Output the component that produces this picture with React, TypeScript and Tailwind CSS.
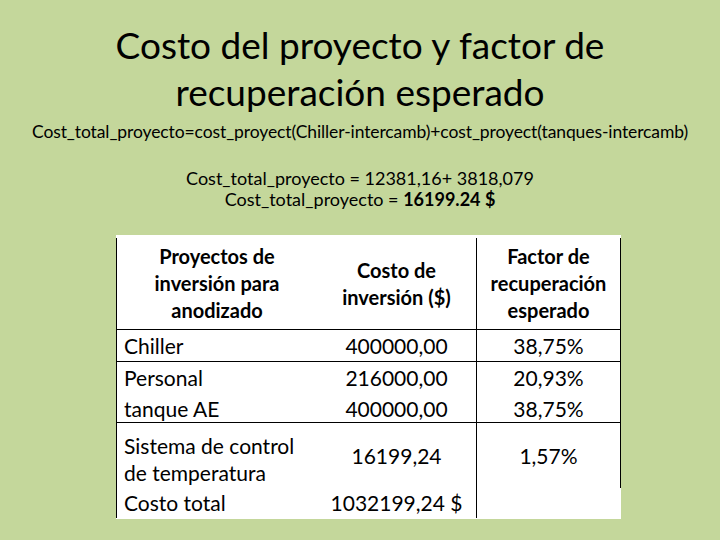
const rows = [
  { label: ["Chiller"], cost: "400000,00", factor: "38,75%" },
];

export default function App() {
  return (
    <div
      className="w-[720px] h-[540px] bg-[#c4d79b] text-black overflow-hidden"
      style={{ fontFamily: "Lato, 'Open Sans', sans-serif" }}
    >
      <h1 className="pt-[21px] text-center text-[37px] leading-[47px] font-normal">
        Costo del proyecto y factor de
        <br />
        recuperación esperado
      </h1>

      <p className="mt-[7px] text-center text-[17.5px] leading-[20px] tracking-[-0.1px]">
        Cost_total_proyecto=cost_proyect(Chiller-intercamb)+cost_proyect(tanques-intercamb)
      </p>

      <div className="mt-[26px] text-center text-[18px] leading-[21px]">
        <p>Cost_total_proyecto = 12381,16+ 3818,079</p>
        <p>
          Cost_total_proyecto = <b>16199.24 $</b>
        </p>
      </div>

      <div className="mt-[25px] ml-[116px] w-[505px] h-[284px] bg-white pt-[3px]">
        <div className="border-l border-black text-[21px]">
          {/* header */}
          <div className="flex h-[92px] border-b border-black font-bold leading-[27px] text-[20px]">
            <div className="w-[200px] flex flex-col justify-center text-center">
              <span>Proyectos de</span>
              <span>inversión para</span>
              <span>anodizado</span>
            </div>
            <div className="w-[159px] flex flex-col justify-center text-center pt-[1px]">
              <span>Costo de</span>
              <span>inversión ($)</span>
            </div>
            <div className="w-[145px] flex flex-col justify-center text-center border-l border-r border-black">
              <span>Factor de</span>
              <span>recuperación</span>
              <span>esperado</span>
            </div>
          </div>

          {rows.map((r) => (
            <div key={r.cost} className="flex h-[32px] border-b border-black items-center">
              <div className="w-[200px] pl-[7px]">{r.label[0]}</div>
              <div className="w-[159px] text-center">{r.cost}</div>
              <div className="w-[145px] h-full flex items-center justify-center border-l border-r border-black">
                {r.factor}
              </div>
            </div>
          ))}

          <div className="flex h-[61px] border-b border-black leading-[31px]">
            <div className="w-[200px] pl-[7px] flex flex-col">
              <span>Personal</span>
              <span>tanque AE</span>
            </div>
            <div className="w-[159px] text-center flex flex-col">
              <span>216000,00</span>
              <span>400000,00</span>
            </div>
            <div className="w-[145px] text-center flex flex-col border-l border-r border-black">
              <span>20,93%</span>
              <span>38,75%</span>
            </div>
          </div>

          <div className="flex h-[65px] leading-[27px]">
            <div className="w-[200px] pl-[7px] pt-[9px] flex flex-col">
              <span>Sistema de control</span>
              <span>de temperatura</span>
            </div>
            <div className="w-[159px] text-center pt-[19px]">16199,24</div>
            <div className="w-[145px] text-center pt-[19px] border-l border-r border-black">1,57%</div>
          </div>

          <div className="flex h-[30px] items-center">
            <div className="w-[200px] pl-[7px]">Costo total</div>
            <div className="w-[159px] text-center">1032199,24 $</div>
            <div className="w-[145px] h-full border-l border-black" />
          </div>
        </div>
      </div>
    </div>
  );
}
